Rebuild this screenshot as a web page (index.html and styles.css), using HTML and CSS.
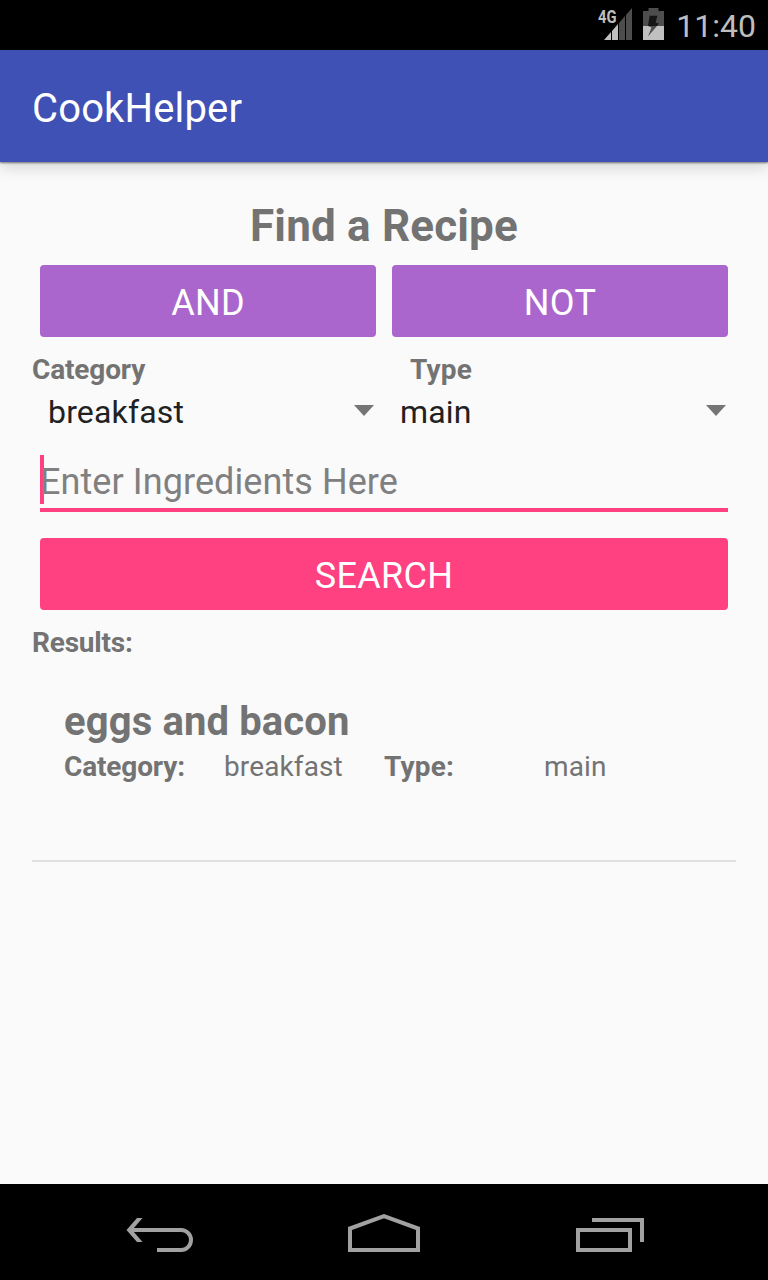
FILE: index.html
```html
<!DOCTYPE html>
<html lang="en">
<head>
<meta charset="utf-8">
<title>CookHelper</title>
<link rel="stylesheet" href="styles.css">
</head>
<body>
<div class="screen">
  <div class="status-bar">
    <div class="signal">
      <span class="network">4G</span>
      <svg width="36" height="34" viewBox="0 0 36 34">
        <path d="M8 32L15 24V32Z" fill="#c0c0c0"/>
        <path d="M16 22.900L22 16V32H16Z" fill="#c0c0c0"/>
        <path d="M23 14.900L29 8V32H23ZM30 6.900L36 0V32H30Z" fill="#4d4d4d"/>
      </svg>
    </div>
    <svg class="battery" width="21" height="32" viewBox="0 0 21 32">
      <path d="M0 3H5.500V0H15.500V3H21V18H0Z" fill="#4d4d4d"/>
      <path d="M0 18H21V32H0Z" fill="#c0c0c0"/>
      <path d="M6.700 7.700H14.300L12.700 14.700L16 15.500L13.900 18H5Z" fill="#151515"/>
      <path d="M5 18H13.900L5 28.500L8.500 19.500Z" fill="#4d4d4d"/>
    </svg>
    <span class="clock">11:40</span>
  </div>
  <header class="app-bar">CookHelper</header>
  <main class="content">
    <h1 class="heading">Find a Recipe</h1>
    <div class="toggles">
      <button class="button">AND</button>
      <button class="button">NOT</button>
    </div>
    <div class="labels"><span class="label category-label">Category</span><span class="label type-label">Type</span></div>
    <div class="spinners">
      <div class="spinner"><span>breakfast</span><svg class="arrow" width="20" height="11" viewBox="0 0 20 11"><path d="M0 0H20L10 11Z" fill="#757575"/></svg></div>
      <div class="spinner"><span>main</span><svg class="arrow" width="20" height="11" viewBox="0 0 20 11"><path d="M0 0H20L10 11Z" fill="#757575"/></svg></div>
    </div>
    <div class="field"><span class="cursor"></span><span class="hint">Enter Ingredients Here</span></div>
    <button class="button search">SEARCH</button>
    <div class="label results-label">Results:</div>
    <article class="result">
      <h2 class="name">eggs and bacon</h2>
      <div class="details">
        <span class="label key">Category:</span><span class="value">breakfast</span>
        <span class="label type-label">Type:</span><span class="value">main</span>
      </div>
    </article>
  </main>
  <nav class="nav-bar">
    <svg width="110" height="96" viewBox="0 0 110 96" fill="none" stroke="#a1a1a1" stroke-width="4">
      <path d="M22 46H71A10 10 0 0 1 71 66H47"/><path d="M27 34H32.500L23.500 44.500V47.500L32.500 58H27L16.500 46Z" fill="#a1a1a1" stroke="none"/>
    </svg>
    <svg width="110" height="96" viewBox="0 0 110 96" fill="none" stroke="#a1a1a1" stroke-width="4">
      <path d="M15 66V44.500L49 32.200L83 44.500V66Z"/>
    </svg>
    <svg width="110" height="96" viewBox="0 0 110 96" fill="none" stroke="#a1a1a1" stroke-width="4">
      <path d="M18 46H70V66H18ZM32 36H82V58"/>
    </svg>
  </nav>
</div>
</body>
</html>
```

FILE: styles.css
```css
* { box-sizing: border-box; }
body { margin: 0; font-family: Roboto, sans-serif; }
.screen { width: 768px; height: 1280px; display: flex; flex-direction: column; background: #fafafa; color: #737373; overflow: hidden; }
.status-bar { height: 50px; flex: none; background: #000; color: #bebebe; display: flex; justify-content: flex-end; align-items: flex-start; padding: 8px 12px 0 0; }
.signal { position: relative; width: 36px; height: 34px; }
.signal svg { display: block; }
.network { position: absolute; left: 2px; top: 0; font-size: 18px; line-height: 18px; font-weight: 700; transform: scaleX(.82); transform-origin: left; }
.battery { margin-left: 11px; }
.clock { font-size: 32px; line-height: 36px; margin-left: 12px; }
.app-bar { position: relative; height: 112px; flex: none; background: #3f51b5; color: #fff; font-size: 40px; line-height: 118px; letter-spacing: .15px; padding-left: 32px; box-shadow: 0 1px 2px rgba(0,0,0,.5), 0 6px 14px rgba(0,0,0,.14); }
.content { flex: 1; padding: 35px 32px 0; }
.heading { margin: 0; height: 58px; font-size: 44px; line-height: 58px; font-weight: 700; letter-spacing: .17px; text-align: center; }
.toggles { display: grid; grid-template-columns: 1fr 1fr; gap: 16px; padding: 10px 8px 0; }
.button { display: block; height: 72px; border: 0; border-radius: 4px; padding: 3px 0 0; background: #aa66cd; color: #fff; font: 400 36px/69px Roboto, sans-serif; letter-spacing: .3px; text-align: center; }
.toggles .button, .search { padding-top: 5px; line-height: 67px; }
.labels { display: flex; padding-top: 16px; }
.label { font-size: 28px; line-height: 33px; font-weight: 700; letter-spacing: -.14px; }
.type-label { letter-spacing: .2px; }
.category-label { width: 378px; }
.spinners { display: grid; grid-template-columns: 352px 352px; height: 51px; padding-top: 4px; color: #212121; font-size: 32px; line-height: 44px; letter-spacing: .17px; }
.spinner { display: flex; justify-content: space-between; align-items: flex-start; padding: 0 10px 0 16px; }
.arrow { margin-top: 15px; }
.field { position: relative; margin: 18px 8px 0; font-size: 36px; line-height: 55px; letter-spacing: .08px; height: 57px; border-bottom: 4px solid #ff4081; color: #808080; }
.cursor { position: absolute; left: 0; top: 0; width: 4px; height: 49px; background: #ff4081; }
.hint { position: relative; }
.search { width: 688px; margin: 26px 8px 0; background: #ff4081; }
.results-label { margin-top: 16px; letter-spacing: -.2px; }
.result { height: 203px; border-bottom: 2px solid #e0e0e0; padding: 39px 32px 0; }
.name { margin: 0; font-size: 40px; line-height: 47px; font-weight: 700; letter-spacing: .12px; }
.details { display: grid; grid-template-columns: repeat(4, 160px); margin-top: 5px; }
.value { font-size: 28px; line-height: 33px; letter-spacing: .12px; }
.nav-bar { height: 96px; flex: none; background: #000; display: flex; justify-content: space-between; padding: 0 98px 0 110px; }
.nav-bar svg { display: block; }
```
